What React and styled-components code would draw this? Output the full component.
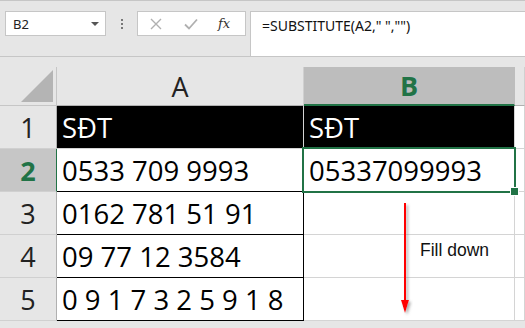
import styled, { createGlobalStyle } from 'styled-components'

const Global = createGlobalStyle`
  html, body { margin: 0; padding: 0; background: #e6e6e6; }
  * { box-sizing: border-box; }
`

const GREEN = '#217346'

const Page = styled.div`
  width: 525px;
  height: 328px;
  overflow: hidden;
  background: #e6e6e6;
  font-family: "Open Sans", "Noto Sans", sans-serif;
`

const TopBar = styled.div`
  height: 57px;
  border-top: 1px solid #c6c6c6;
  border-bottom: 1px solid #c6c6c6;
  padding: 10px 0 0 5px;
  display: flex;
  align-items: flex-start;
`

const NameBox = styled.div`
  width: 101px;
  height: 25px;
  background: #fff;
  border: 1px solid #c6c6c6;
  display: flex;
  align-items: center;
  justify-content: space-between;
  padding: 0 6px 0 7px;
  font-family: "Noto Sans", sans-serif;
  font-size: 13px;
  color: #222;
`

const Caret = styled.span`
  width: 0;
  height: 0;
  border-left: 4px solid transparent;
  border-right: 4px solid transparent;
  border-top: 4px solid #555;
`

const Dots = styled.div`
  width: 31px;
  height: 25px;
  display: flex;
  flex-direction: column;
  align-items: center;
  justify-content: center;
  gap: 2px;
  span {
    width: 2px;
    height: 2px;
    background: #777;
  }
`

const Buttons = styled.div`
  width: 109px;
  height: 25px;
  background: #fff;
  border: 1px solid #c6c6c6;
  display: flex;
  align-items: center;
  padding-left: 12px;
  gap: 22px;
`

const Fx = styled.span`
  font-family: "DejaVu Serif", "Liberation Serif", serif;
  font-style: italic;
  font-size: 13px;
  color: #333;
  margin-left: -2px;
`

const Formula = styled.div`
  margin-left: 4px;
  flex: 1;
  align-self: stretch;
  background: #fff;
  border-left: 1px solid #c6c6c6;
  border-top: 1px solid #c6c6c6;
  padding: 4px 0 0 11px;
  font-family: "Noto Sans", sans-serif;
  font-size: 14px;
  color: #111;
`

const SheetWrap = styled.div`
  position: relative;
  padding-top: 10px;
`

const Grid = styled.div`
  display: grid;
  grid-template-columns: 57px 247px 211px 1fr;
  grid-template-rows: 39px repeat(5, 43px);
`

const Corner = styled.div`
  border-right: 1px solid #c6c6c6;
  border-bottom: 1px solid #c6c6c6;
  display: flex;
  align-items: flex-end;
  justify-content: flex-end;
  padding: 0 3px 3px 0;
`

const ColHead = styled.div`
  background: ${({ $active }) => ($active ? '#bdbdbd' : '#e6e6e6')};
  border-right: 1px solid ${({ $active }) => ($active ? '#bdbdbd' : '#d0d0d0')};
  border-bottom: ${({ $active }) => ($active ? `2px solid ${GREEN}` : '1px solid #b0b0b0')};
  display: flex;
  align-items: center;
  justify-content: center;
  font-family: "Open Sans", sans-serif;
  font-size: 27px;
  font-weight: ${({ $active }) => ($active ? 700 : 400)};
  color: ${({ $active }) => ($active ? GREEN : '#222')};
  line-height: 1;
`

const RowHead = styled.div`
  background: ${({ $active }) => ($active ? '#c6c6c6' : '#e6e6e6')};
  border-right: 1px solid ${({ $active }) => ($active ? GREEN : '#b0b0b0')};
  border-bottom: 1px solid #d0d0d0;
  display: flex;
  align-items: center;
  justify-content: center;
  font-size: 27px;
  font-weight: ${({ $active }) => ($active ? 700 : 400)};
  color: ${({ $active }) => ($active ? GREEN : '#222')};
`

const Cell = styled.div`
  position: relative;
  background: ${({ $dark }) => ($dark ? '#000' : '#fff')};
  color: ${({ $dark }) => ($dark ? '#fff' : '#000')};
  border-right: 1px solid ${({ $boxed }) => ($boxed ? '#000' : '#d4d4d4')};
  border-bottom: 1px solid ${({ $boxed }) => ($boxed ? '#000' : '#d4d4d4')};
  display: flex;
  align-items: center;
  padding-left: 5px;
  font-size: 27.5px;
  white-space: nowrap;
`

const Selection = styled.div`
  position: absolute;
  z-index: 2;
  top: -2px;
  left: -2px;
  right: -2px;
  bottom: -2px;
  border: 2px solid ${GREEN};
  pointer-events: none;
  &::after {
    content: '';
    position: absolute;
    right: -5px;
    bottom: -5px;
    width: 7px;
    height: 7px;
    background: ${GREEN};
    border: 1px solid #fff;
  }
`

const Note = styled.div`
  position: absolute;
  left: 420px;
  top: 183px;
  font-family: "Liberation Sans", Arial, sans-serif;
  font-size: 17.5px;
  color: #111;
`

const Arrow = styled.svg`
  position: absolute;
  left: 398px;
  top: 146px;
`

const rows = [
  { n: 1, a: 'SĐT', b: 'SĐT', dark: true },
  { n: 2, a: '0533 709 9993', b: '05337099993', active: true },
  { n: 3, a: '0162 781 51 91', b: '' },
  { n: 4, a: '09 77 12 3584', b: '' },
  { n: 5, a: '0 9 1 7 3 2 5 9 1 8', b: '' },
]

export default function App() {
  return (
    <Page>
      <Global />
      <TopBar>
        <NameBox>
          B2
          <Caret />
        </NameBox>
        <Dots>
          <span />
          <span />
          <span />
        </Dots>
        <Buttons>
          <svg width="12" height="12" viewBox="0 0 12 12">
            <path d="M1 1L11 11M11 1L1 11" stroke="#b0b0b0" strokeWidth="1.4" fill="none" />
          </svg>
          <svg width="14" height="12" viewBox="0 0 14 12">
            <path d="M1 6.5L5 10.5L13 1.5" stroke="#b0b0b0" strokeWidth="1.8" fill="none" />
          </svg>
          <Fx>fx</Fx>
        </Buttons>
        <Formula>=SUBSTITUTE(A2," ","")</Formula>
      </TopBar>
      <SheetWrap>
        <Grid>
          <Corner>
            <svg width="32" height="32" viewBox="0 0 32 32">
              <path d="M32 0V32H0Z" fill="#b4b4b4" />
            </svg>
          </Corner>
          <ColHead>A</ColHead>
          <ColHead $active>B</ColHead>
          <ColHead />
          {rows.map((r) => (
            <Row key={r.n} r={r} />
          ))}
        </Grid>
        <Note>Fill down</Note>
        <Arrow width="20" height="115" viewBox="0 0 20 115">
          <defs>
            <filter id="sh" x="-50%" y="-10%" width="200%" height="130%">
              <feDropShadow dx="2" dy="2" stdDeviation="1.5" floodColor="#888" floodOpacity="0.7" />
            </filter>
          </defs>
          <g filter="url(#sh)">
            <line x1="7" y1="0" x2="7" y2="98" stroke="#ff0000" strokeWidth="2" />
            <path d="M3 97H11L7 110Z" fill="#ff0000" />
          </g>
        </Arrow>
      </SheetWrap>
    </Page>
  )
}

function Row({ r }) {
  return (
    <>
      <RowHead $active={r.active}>{r.n}</RowHead>
      <Cell $dark={r.dark} $boxed={!r.dark}>{r.a}</Cell>
      <Cell $dark={r.dark}>
        {r.b}
        {r.active && <Selection />}
      </Cell>
      <Cell $dark={false} />
    </>
  )
}
